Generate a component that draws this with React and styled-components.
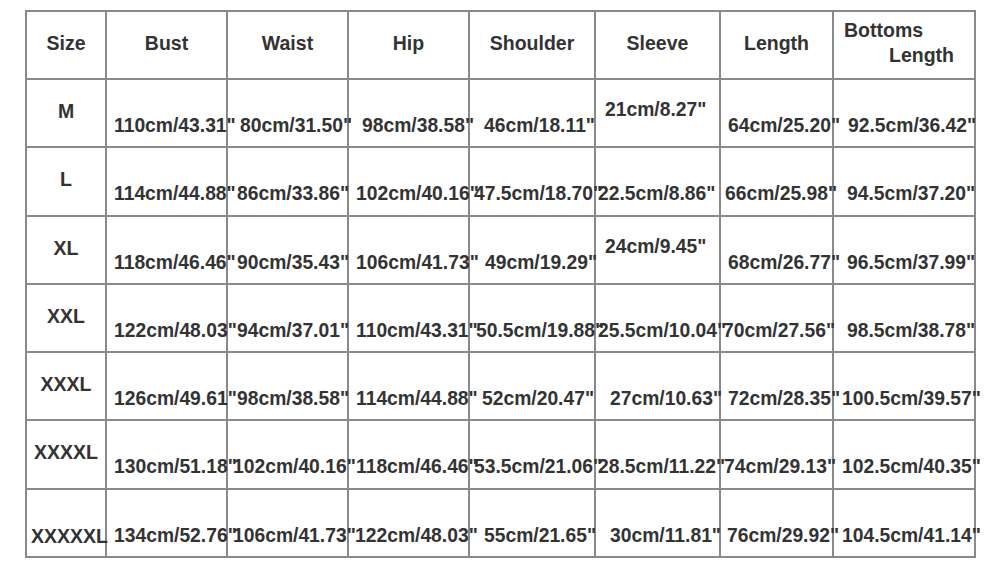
import React from 'react';
import styled, { createGlobalStyle } from 'styled-components';

const GlobalStyle = createGlobalStyle`
  html, body {
    margin: 0;
    padding: 0;
    background: #ffffff;
  }
  body {
    font-family: "Liberation Sans", Arial, sans-serif;
    color: #333333;
  }
`;

const Page = styled.div`
  width: 1000px;
  height: 568px;
  overflow: hidden;
  padding: 10px 0 0 25px;
  box-sizing: border-box;
`;

const Table = styled.table`
  border-collapse: collapse;
  table-layout: fixed;
  width: 951px;
`;

const Col = styled.col`
  width: ${(p) => p.$w}px;
`;

const Row = styled.tr`
  height: ${(p) => p.$h}px;
`;

const offsets = { head: 20, mid: 20, top: 19, low: 35 };

const Cell = styled.td`
  border: 2px solid #8a8a8a;
  vertical-align: top;
  white-space: nowrap;
  overflow: visible;
  text-align: left;
  font-weight: 700;
  font-size: 19.3px;
  line-height: 22px;
  color: #333333;
  padding: ${(p) => offsets[p.$v] ?? 20}px 0 0 ${(p) => p.$indent ?? 4}px;
`;

const HeadCell = styled(Cell)`
  font-size: 19.5px;
  text-align: center;
  padding: 20px 4px 0 4px;
`;

const SizeCell = styled(Cell)`
  font-size: 19.5px;
  text-align: center;
  padding-right: 4px;
`;

const StackedHead = styled(HeadCell)`
  text-align: left;
  padding: 6px 0 0 0;
  line-height: 25px;
`;

const HeadLine = styled.span`
  display: block;
  padding-left: ${(p) => p.$indent}px;
`;

const columns = [80, 121, 121, 121, 126, 125, 113, 142];
const heights = [68, 68, 69, 68, 68, 68, 69, 68];

const headers = ['Size', 'Bust', 'Waist', 'Hip', 'Shoulder', 'Sleeve', 'Length'];

// each value: [text, left indent, vertical placement]
const rows = [
  {
    size: 'M',
    sizeV: 'mid',
    values: [
      ['110cm/43.31"', 7],
      ['80cm/31.50"', 12],
      ['98cm/38.58"', 13],
      ['46cm/18.11"', 14],
      ['21cm/8.27"', 9, 'top'],
      ['64cm/25.20"', 7],
      ['92.5cm/36.42"', 14],
    ],
  },
  {
    size: 'L',
    sizeV: 'mid',
    values: [
      ['114cm/44.88"', 7],
      ['86cm/33.86"', 9],
      ['102cm/40.16"', 7],
      ['47.5cm/18.70"', 4],
      ['22.5cm/8.86"', 2],
      ['66cm/25.98"', 4],
      ['94.5cm/37.20"', 13],
    ],
  },
  {
    size: 'XL',
    sizeV: 'mid',
    values: [
      ['118cm/46.46"', 7],
      ['90cm/35.43"', 9],
      ['106cm/41.73"', 7],
      ['49cm/19.29"', 15],
      ['24cm/9.45"', 9, 'top'],
      ['68cm/26.77"', 7],
      ['96.5cm/37.99"', 13],
    ],
  },
  {
    size: 'XXL',
    sizeV: 'mid',
    values: [
      ['122cm/48.03"', 7],
      ['94cm/37.01"', 9],
      ['110cm/43.31"', 7],
      ['50.5cm/19.88"', 6],
      ['25.5cm/10.04"', 2],
      ['70cm/27.56"', 2],
      ['98.5cm/38.78"', 13],
    ],
  },
  {
    size: 'XXXL',
    sizeV: 'mid',
    values: [
      ['126cm/49.61"', 7],
      ['98cm/38.58"', 9],
      ['114cm/44.88"', 7],
      ['52cm/20.47"', 12],
      ['27cm/10.63"', 14],
      ['72cm/28.35"', 7],
      ['100.5cm/39.57"', 8],
    ],
  },
  {
    size: 'XXXXL',
    sizeV: 'mid',
    values: [
      ['130cm/51.18"', 7],
      ['102cm/40.16"', 5],
      ['118cm/46.46"', 7],
      ['53.5cm/21.06"', 4],
      ['28.5cm/11.22"', 2],
      ['74cm/29.13"', 3],
      ['102.5cm/40.35"', 8],
    ],
  },
  {
    size: 'XXXXXL',
    sizeV: 'low',
    values: [
      ['134cm/52.76"', 7],
      ['106cm/41.73"', 5],
      ['122cm/48.03"', 6],
      ['55cm/21.65"', 14],
      ['30cm/11.81"', 14],
      ['76cm/29.92"', 6],
      ['104.5cm/41.14"', 8],
    ],
  },
];

export default function App() {
  return (
    <Page>
      <GlobalStyle />
      <Table>
        <colgroup>
          {columns.map((w, i) => (
            <Col key={i} $w={w} />
          ))}
        </colgroup>
        <tbody>
          <Row $h={heights[0]}>
            {headers.map((h) => (
              <HeadCell key={h}>{h}</HeadCell>
            ))}
            <StackedHead>
              <HeadLine $indent={10}>Bottoms</HeadLine>
              <HeadLine $indent={55}>Length</HeadLine>
            </StackedHead>
          </Row>
          {rows.map((r, i) => (
            <Row key={r.size} $h={heights[i + 1]}>
              <SizeCell $v={r.sizeV} $indent={4}>
                {r.size}
              </SizeCell>
              {r.values.map(([text, indent, v], j) => (
                <Cell key={j} $indent={indent} $v={v || 'low'}>
                  {text}
                </Cell>
              ))}
            </Row>
          ))}
        </tbody>
      </Table>
    </Page>
  );
}
